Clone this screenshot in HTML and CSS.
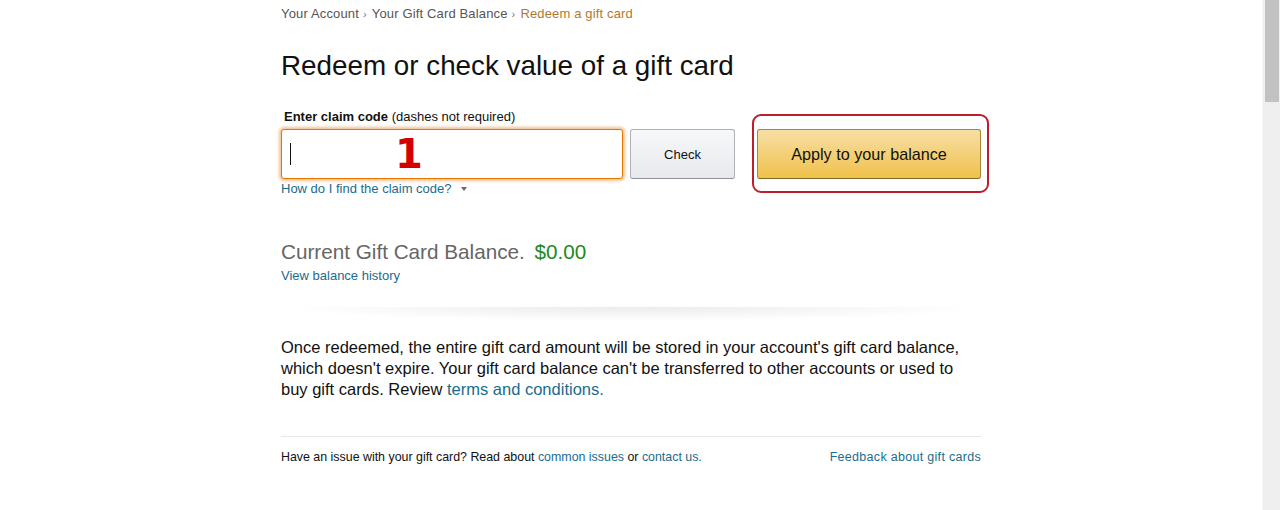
FILE: index.html
```html
<!DOCTYPE html>
<html lang="en">
<head>
<meta charset="utf-8">
<title>Redeem or check value of a gift card</title>
<link rel="stylesheet" href="styles.css">
</head>
<body>
<div class="window">
  <main class="page">
    <div class="content">
      <nav class="crumbs">
        <a href="#" class="crumb">Your Account</a><span class="sep">›</span><a href="#" class="crumb">Your Gift Card Balance</a><span class="sep">›</span><a href="#" class="crumb current">Redeem a gift card</a>
      </nav>

      <h1 class="title">Redeem or check value of a gift card</h1>

      <div class="label"><b>Enter claim code</b> (dashes not required)</div>
      <div class="claim-row">
        <div class="input-wrap">
          <div class="claim-input"><span class="cursor"></span></div>
          <span class="marker">1</span>
        </div>
        <button class="btn btn-check">Check</button>
        <div class="apply-wrap">
          <button class="btn btn-apply">Apply to your balance</button>
        </div>
      </div>
      <a href="#" class="link small help">How do I find the claim code? <span class="caret"></span></a>

      <div class="balance">
        <span class="balance-label">Current Gift Card Balance.</span>
        <span class="balance-amount">$0.00</span>
      </div>
      <a href="#" class="link small history">View balance history</a>

      <div class="divider"></div>

      <p class="info">Once redeemed, the entire gift card amount will be stored in your account's gift card balance, which doesn't expire. Your gift card balance can't be transferred to other accounts or used to buy gift cards. Review <a href="#" class="link">terms and conditions.</a></p>

      <div class="footer">
        <span class="issue">Have an issue with your gift card? Read about <a href="#" class="link">common issues</a> or <a href="#" class="link">contact us.</a></span>
        <a href="#" class="link feedback">Feedback about gift cards</a>
      </div>
    </div>
  </main>
  <div class="scrollbar"><div class="thumb"></div></div>
</div>
</body>
</html>
```

FILE: styles.css
```css
html, body {
  margin: 0;
  padding: 0;
  background: #fff;
}
body {
  font-family: Arial, "Liberation Sans", sans-serif;
  color: #111;
}
.window {
  display: flex;
  height: 510px;
  overflow: hidden;
}
.page {
  flex: 1;
}
.scrollbar {
  width: 17px;
  background: #efefef;
  border-left: 1px solid #f6f6f6;
  display: flex;
  justify-content: center;
}
.thumb {
  width: 14px;
  height: 102px;
  background: #c2c2c2;
}
.content {
  width: 700px;
  margin: 0 auto;
  padding-top: 6px;
}
a {
  text-decoration: none;
}
.link {
  color: #1a6c8c;
}
.crumbs {
  font-size: 13px;
  line-height: 16px;
  letter-spacing: 0.15px;
  color: #555;
}
.crumb {
  color: #555;
}
.crumb.current {
  color: #b3782c;
}
.sep {
  color: #777;
  font-size: 11px;
  margin: 0 5px 0 4px;
}
.title {
  font-size: 27.8px;
  font-weight: normal;
  line-height: 36px;
  margin: 26px 0 0;
  color: #111;
}
.label {
  margin-top: 25px;
  margin-left: 3px;
  font-size: 13px;
  line-height: 16px;
}
.claim-row {
  display: flex;
  align-items: center;
  margin-top: 4px;
}
.input-wrap {
  position: relative;
  width: 342px;
  height: 50px;
}
.claim-input {
  box-sizing: border-box;
  width: 100%;
  height: 100%;
  border: 1px solid #e77600;
  border-radius: 3px;
  box-shadow: 0 0 3px 2px rgba(228, 121, 17, 0.45);
  background: #fff;
  display: flex;
  align-items: center;
  padding-left: 8px;
}
.cursor {
  width: 1px;
  height: 22px;
  background: #111;
}
.marker {
  position: absolute;
  left: 114px;
  top: 2px;
  font-family: "DejaVu Sans", sans-serif;
  font-weight: bold;
  font-size: 40px;
  line-height: 46px;
  color: #d40000;
}
.btn {
  box-sizing: border-box;
  height: 50px;
  border-radius: 3px;
  font-family: Arial, "Liberation Sans", sans-serif;
  color: #111;
  cursor: pointer;
  padding: 0;
}
.btn-check {
  width: 105px;
  margin-left: 7px;
  font-size: 13px;
  background: linear-gradient(#f7f8fa, #e7e9ec);
  border: 1px solid #adb1b8;
  border-bottom-color: #8d9096;
}
.apply-wrap {
  position: relative;
  margin-left: 22px;
}
.apply-wrap::before {
  content: "";
  position: absolute;
  left: -5px;
  top: -15px;
  right: -8px;
  bottom: -14px;
  border: 2px solid #bd1e2c;
  border-radius: 9px;
}
.btn-apply {
  display: block;
  width: 224px;
  font-size: 16.2px;
  background: linear-gradient(#f7dfa5, #f0c14b);
  border: 1px solid #a88734;
  border-bottom-color: #846a29;
}
.small {
  font-size: 13px;
  line-height: 16px;
}
.help {
  display: inline-block;
  margin-top: 1px;
}
.caret {
  display: inline-block;
  margin-left: 6px;
  vertical-align: 2px;
  border-left: 3.5px solid transparent;
  border-right: 3.5px solid transparent;
  border-top: 4px solid #666;
}
.balance {
  margin-top: 43px;
  font-size: 20.7px;
  line-height: 24px;
}
.balance-label {
  color: #666;
}
.balance-amount {
  color: #218a21;
  margin-left: 4px;
}
.history {
  display: block;
  margin-top: 4px;
}
.divider {
  height: 14px;
  margin: 22px 0 0;
  background: radial-gradient(ellipse 50% 100% at 50% 0%, rgba(0, 0, 0, 0.08), rgba(0, 0, 0, 0) 100%);
  border-top: 1px solid transparent;
}
.info {
  font-size: 16.5px;
  line-height: 21px;
  margin: 16px 0 0;
  color: #111;
}
.footer {
  margin-top: 36px;
  border-top: 1px solid #e7e7e7;
  padding-top: 12px;
  display: flex;
  justify-content: space-between;
  font-size: 12.4px;
  line-height: 16px;
}
.feedback {
  font-size: 12.5px;
  letter-spacing: 0.3px;
}
```
